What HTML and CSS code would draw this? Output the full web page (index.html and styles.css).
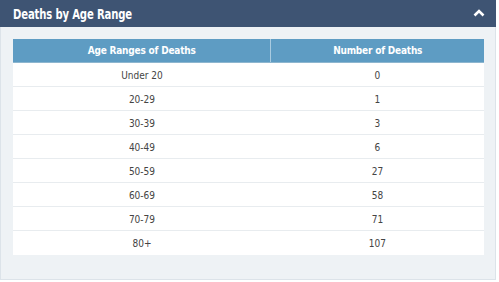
FILE: index.html
```html
<!DOCTYPE html>
<html>
<head>
<meta charset="utf-8">
<link rel="stylesheet" href="styles.css">
</head>
<body>
<div class="panel">
  <div class="panel-head">
    <span class="title">Deaths by Age Range</span>
    <svg class="chev" width="12" height="9" viewBox="0 0 12 9"><path d="M1.5 7.5 L6 3 L10.5 7.5" fill="none" stroke="#fff" stroke-width="2.6"/></svg>
  </div>
  <div class="panel-body">
    <table class="tbl">
      <thead>
        <tr><th>Age Ranges of Deaths</th><th>Number of Deaths</th></tr>
      </thead>
      <tbody>
        <tr><td>Under 20</td><td>0</td></tr>
        <tr><td>20-29</td><td>1</td></tr>
        <tr><td>30-39</td><td>3</td></tr>
        <tr><td>40-49</td><td>6</td></tr>
        <tr><td>50-59</td><td>27</td></tr>
        <tr><td>60-69</td><td>58</td></tr>
        <tr><td>70-79</td><td>71</td></tr>
        <tr><td>80+</td><td>107</td></tr>
      </tbody>
    </table>
  </div>
</div>
</body>
</html>
```
FILE: styles.css
```css
html, body { margin: 0; padding: 0; background: #ffffff; }
body { width: 499px; height: 282px; overflow: hidden; }
.panel {
  width: 496px;
  height: 280px;
  box-sizing: border-box;
  border: 1px solid #dce3e9;
  border-top: none;
  background: #eef2f5;
  display: flex;
  flex-direction: column;
}
.panel-head {
  height: 27px;
  background: #3e5473;
  display: flex;
  align-items: center;
  justify-content: space-between;
  padding: 0 11px 0 13px;
  margin: 0 -1px;
}
.title {
  display: inline-block;
  font-family: "DejaVu Sans Condensed", "DejaVu Sans", sans-serif;
  font-weight: bold;
  font-size: 14px;
  letter-spacing: -0.2px;
  color: #ffffff;
  transform: scaleX(0.8);
  transform-origin: left center;
}
.chev { display: block; margin-top: -2px; }
.panel-body { padding: 12px 11px 0 12px; }
.tbl {
  width: 100%;
  border-collapse: collapse;
  background: #ffffff;
  font-family: "DejaVu Sans Condensed", "DejaVu Sans", sans-serif;
  font-size: 10px;
  color: #444;
}
.tbl th {
  background: #5e9cc3;
  color: #ffffff;
  font-weight: bold;
  height: 23px;
  padding: 0;
  text-align: center;
  letter-spacing: -0.2px;
  border-left: 1px solid #a9cbe0;
  border-bottom: 1px solid #8db6cf;
}
.tbl th:first-child { border-left: none; }
.tbl td {
  height: 22px;
  padding: 1px 0 0;
  text-align: center;
  border-bottom: 1px solid #e8ecef;
}
.tbl tbody tr:last-child td { border-bottom: none; height: 23px; }
```
